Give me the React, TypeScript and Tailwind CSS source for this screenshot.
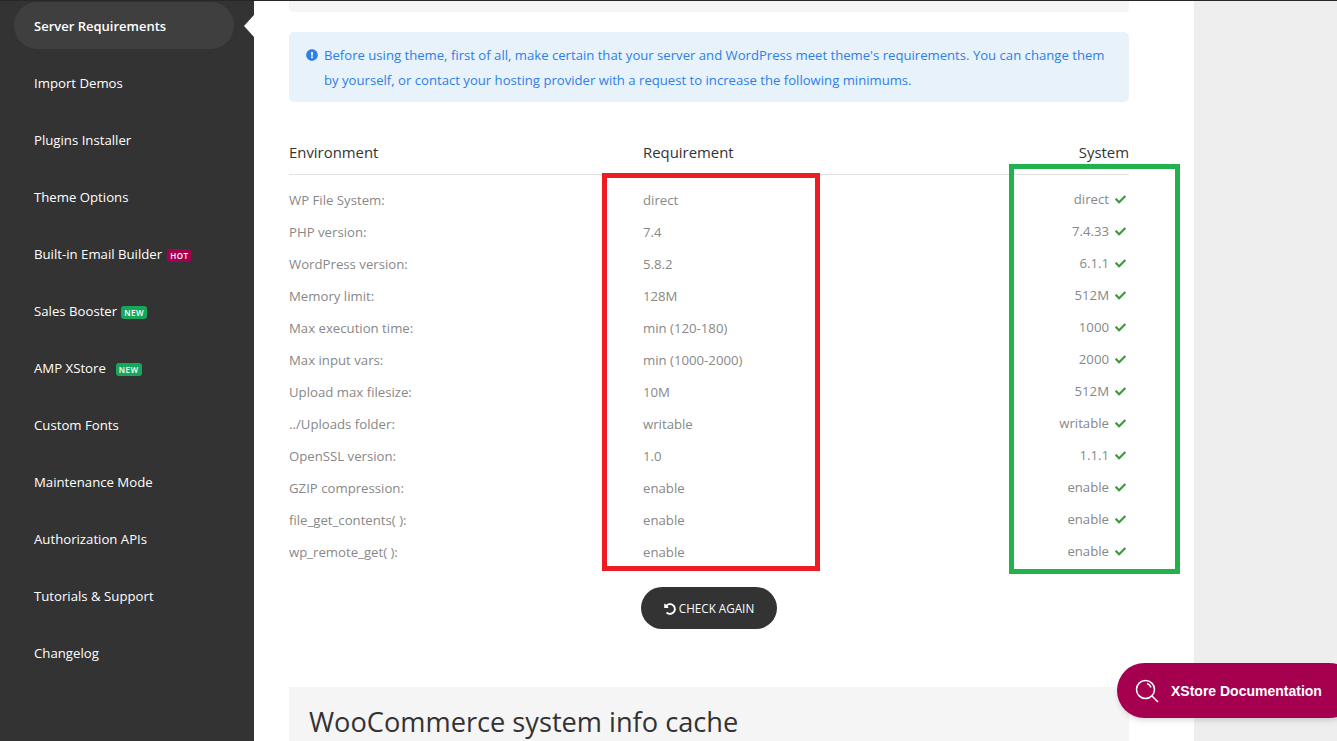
import React from "react";
import { FaCheck, FaExclamationCircle, FaUndoAlt } from "react-icons/fa";

const navItems = [
  { label: "Import Demos" },
  { label: "Plugins Installer" },
  { label: "Theme Options" },
  { label: "Built-in Email Builder", badge: "HOT" },
  { label: "Sales Booster", badge: "NEW" },
  { label: "AMP XStore", badge: "NEW", wide: true },
  { label: "Custom Fonts" },
  { label: "Maintenance Mode" },
  { label: "Authorization APIs" },
  { label: "Tutorials & Support" },
  { label: "Changelog" },
];

const rows = [
  ["WP File System:", "direct", "direct"],
  ["PHP version:", "7.4", "7.4.33"],
  ["WordPress version:", "5.8.2", "6.1.1"],
  ["Memory limit:", "128M", "512M"],
  ["Max execution time:", "min (120-180)", "1000"],
  ["Max input vars:", "min (1000-2000)", "2000"],
  ["Upload max filesize:", "10M", "512M"],
  ["../Uploads folder:", "writable", "writable"],
  ["OpenSSL version:", "1.0", "1.1.1"],
  ["GZIP compression:", "enable", "enable"],
  ["file_get_contents( ):", "enable", "enable"],
  ["wp_remote_get( ):", "enable", "enable"],
];

const Sidebar = () => {
  return (
    <aside className="relative w-[254px] shrink-0 bg-[#333333] text-[13.2px] text-white">
      <div className="mx-[14px] mt-[2px] flex h-[47px] w-[220px] items-center rounded-[24px] bg-[#3f3f3f] px-5 pt-[2px] text-[13px] font-semibold">
        Server Requirements
      </div>
      <div className="absolute right-0 top-[15px] h-0 w-0 border-y-[11px] border-r-[10px] border-y-transparent border-r-white" />
      <nav className="mt-[6px] flex flex-col">
        {navItems.map((item) => (
          <div key={item.label} className="flex h-[57px] items-center pl-[34px]">
            <span>{item.label}</span>
            {item.badge && (
              <span
                className={
                  item.badge === "HOT"
                    ? "ml-[5px] mt-[1px] rounded-[3px] bg-[#a4004f] px-[3px] text-[8px] font-semibold leading-[13px] tracking-[0.5px]"
                    : item.wide
                    ? "ml-[10px] mt-[1px] rounded-[3px] bg-[#15a85c] px-[3px] text-[8px] font-semibold leading-[13px] tracking-[0.5px]"
                    : "ml-[4px] mt-[1px] rounded-[3px] bg-[#15a85c] px-[3px] text-[8px] font-semibold leading-[13px] tracking-[0.5px]"
                }
              >
                {item.badge}
              </span>
            )}
          </div>
        ))}
      </nav>
    </aside>
  );
};

const App = () => {
  return (
    <div className="relative flex h-[741px] overflow-hidden bg-[#eeeeee] font-['Open_Sans',sans-serif]">
      <div className="absolute inset-x-0 top-0 z-10 h-px bg-[#23282d]" />
      <Sidebar />
      <main className="relative w-[940px] shrink-0 bg-white pl-[35px] pr-[65px] pt-px">
        <div className="h-[11px] rounded-b-[4px] bg-[#f5f5f5]" />
        <div className="mt-5 flex h-[70px] gap-[6px] rounded-[5px] bg-[#e7f2fb] pl-[17px] pt-[11px] text-[13.13px] leading-[25px] text-[#2f7fe6]">
          <FaExclamationCircle className="mt-[6px] shrink-0 text-[12px]" />
          <p className="whitespace-nowrap">
            Before using theme, first of all, make certain that your server and WordPress meet theme's requirements. You can change them
            <br />
            by yourself, or contact your hosting provider with a request to increase the following minimums.
          </p>
        </div>
        <div className="mt-[31px] flex h-[42px] items-center border-b border-[#e1e1e1] pb-[2px] text-[14.9px] text-[#333333]">
          <span className="w-[354px]">Environment</span>
          <span className="flex-1">Requirement</span>
          <span>System</span>
        </div>
        <div className="mt-[10px] text-[13.2px] text-[#888888]">
          {rows.map(([name, need, have]) => (
            <div key={name} className="flex h-8 items-center">
              <span className="w-[354px]">{name}</span>
              <span className="flex-1">{need}</span>
              <span className="-mt-[2px] flex items-center gap-[6px] pr-[3px]">
                {have}
                <FaCheck className="-mt-[1px] text-[11px] text-[#3f9a3c]" />
              </span>
            </div>
          ))}
        </div>
        <div className="mt-[18px] flex justify-center">
          <button className="flex h-[42px] w-[136px] items-center justify-center gap-[3px] rounded-[21px] bg-[#333333] pt-px text-[11.7px] text-white">
            <FaUndoAlt className="text-[12px]" />
            CHECK AGAIN
          </button>
        </div>
        <div className="mt-[58px] h-[100px] bg-[#f5f5f5] px-5 pt-[17px] text-[27.2px] font-medium leading-9 text-[#333333]">
          WooCommerce system info cache
        </div>
        <div className="absolute left-[348px] top-[173px] h-[398px] w-[218px] border-[5px] border-[#ed1c24]" />
        <div className="absolute left-[755px] top-[164px] h-[410px] w-[171px] border-[5px] border-[#22b14c]" />
      </main>
      <div className="absolute left-[1117px] top-[663px] flex h-[55px] w-[240px] items-center gap-[12px] rounded-[28px] bg-[#a4004f] pl-[18px] pt-px font-['Liberation_Sans',sans-serif] text-[14px] font-bold text-white shadow-md">
        <svg viewBox="0 0 24 24" className="h-6 w-6" fill="none" stroke="currentColor" strokeWidth="1.5">
          <circle cx="10.5" cy="10.5" r="9" />
          <path d="M17 17 23 23" />
          <path d="M12 4.5a6 6 0 0 1 4 4" />
        </svg>
        XStore Documentation
      </div>
    </div>
  );
};

export default App;
